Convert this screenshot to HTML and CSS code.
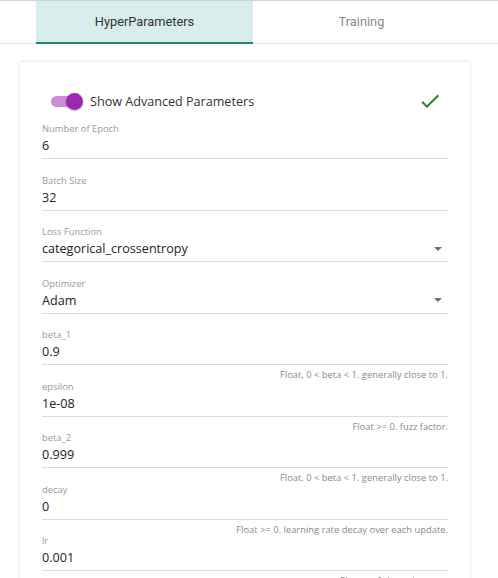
FILE: index.html
```html
<!DOCTYPE html>
<html>
<head>
<meta charset="utf-8">
<link rel="stylesheet" href="styles.css">
</head>
<body>
<div class="tabs">
  <div class="tab active">HyperParameters</div>
  <div class="tab">Training</div>
</div>
<div class="card">
  <div class="toggle-row">
    <span class="switch"><span class="track"></span><span class="thumb"></span></span>
    <span class="toggle-label">Show Advanced Parameters</span>
    <svg class="check" width="24" height="24" viewBox="0 0 24 24"><path d="M9 16.17L4.83 12l-1.42 1.41L9 19 21 7l-1.41-1.41z"/></svg>
  </div>
  <div class="field">
    <div class="label">Number of Epoch</div>
    <div class="input"><span class="value">6</span></div>
    <div class="hint"></div>
  </div>
  <div class="field">
    <div class="label">Batch Size</div>
    <div class="input"><span class="value">32</span></div>
    <div class="hint"></div>
  </div>
  <div class="field">
    <div class="label">Loss Function</div>
    <div class="input"><span class="value">categorical_crossentropy</span><span class="arrow"></span></div>
    <div class="hint"></div>
  </div>
  <div class="field">
    <div class="label">Optimizer</div>
    <div class="input"><span class="value">Adam</span><span class="arrow"></span></div>
    <div class="hint"></div>
  </div>
  <div class="field">
    <div class="label">beta_1</div>
    <div class="input"><span class="value">0.9</span></div>
    <div class="hint">Float, 0 &lt; beta &lt; 1. generally close to 1.</div>
  </div>
  <div class="field">
    <div class="label">epsilon</div>
    <div class="input"><span class="value">1e-08</span></div>
    <div class="hint">Float &gt;= 0. fuzz factor.</div>
  </div>
  <div class="field">
    <div class="label">beta_2</div>
    <div class="input"><span class="value">0.999</span></div>
    <div class="hint">Float, 0 &lt; beta &lt; 1. generally close to 1.</div>
  </div>
  <div class="field">
    <div class="label">decay</div>
    <div class="input"><span class="value">0</span></div>
    <div class="hint">Float &gt;= 0. learning rate decay over each update.</div>
  </div>
  <div class="field">
    <div class="label">lr</div>
    <div class="input"><span class="value">0.001</span></div>
    <div class="hint">Float &gt;= 0. Learning rate.</div>
  </div>
</div>
</body>
</html>
```

FILE: styles.css
```css
html {
  overflow: hidden;
}
body {
  margin: 0;
  background: #ffffff;
  font-family: "Open Sans", "Liberation Sans", sans-serif;
  color: #222;
}
.tabs {
  display: flex;
  height: 42px;
  padding-left: 36px;
  border-top: 1px solid #d2d2d2;
  border-bottom: 1px solid #e2e2e2;
}
.tab {
  width: 217px;
  height: 41px;
  margin-bottom: -1px;
  border-bottom: 2px solid transparent;
  display: flex;
  align-items: center;
  justify-content: center;
  font-family: Roboto, "Liberation Sans", sans-serif;
  font-size: 12.8px;
  color: #8a8a8a;
}
.tab.active {
  background: #d7eeec;
  border-bottom-color: #16897b;
  color: #333;
}
.card {
  margin: 18px 28px 0 20px;
  padding: 22px 22px 0 22px;
  background: #fff;
  box-shadow: 0 0 3px rgba(0, 0, 0, 0.18);
}
.toggle-row {
  height: 34px;
  margin-bottom: 4px;
  display: flex;
  align-items: center;
}
.switch {
  display: flex;
  align-items: center;
  margin-left: 9px;
}
.track {
  width: 30px;
  height: 11px;
  border-radius: 6px;
  background: #cc8ad8;
}
.thumb {
  width: 17px;
  height: 17px;
  border-radius: 50%;
  margin-left: -15px;
  background: #9c27b0;
  box-shadow: 0 1px 2px rgba(0, 0, 0, 0.25);
}
.toggle-label {
  margin-left: 7px;
  font-size: 12.6px;
  color: #333;
  flex: 1;
}
.check {
  fill: #2e7d32;
  margin-right: 6px;
}
.field {
  display: flex;
  flex-direction: column;
}
.label {
  font-size: 9.4px;
  line-height: 13px;
  color: #9a9a9a;
}
.input {
  display: flex;
  align-items: center;
  height: 21px;
  padding-bottom: 2px;
  border-bottom: 1px solid #dcdcdc;
}
.value {
  flex: 1;
  font-size: 12.6px;
  color: #222;
}
.arrow {
  width: 0;
  height: 0;
  margin-right: 6px;
  border-left: 4px solid transparent;
  border-right: 4px solid transparent;
  border-top: 4px solid #6f6f6f;
}
.hint {
  height: 14.5px;
  font-size: 9.4px;
  line-height: 19px;
  text-align: right;
  color: #8a8a8a;
}
```
